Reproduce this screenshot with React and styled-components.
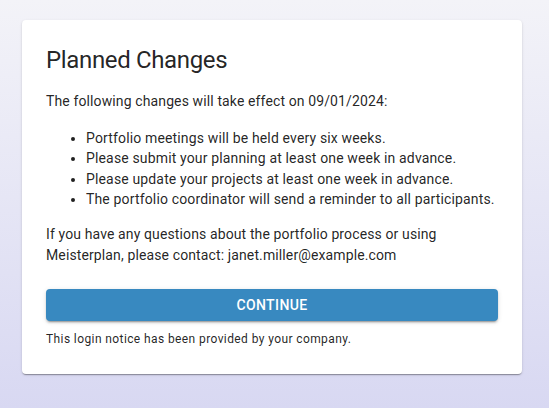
import React from "react";
import styled, { createGlobalStyle } from "styled-components";

const Global = createGlobalStyle`
  html, body { margin: 0; padding: 0; }
  body {
    font-family: Roboto, "Liberation Sans", Arial, sans-serif;
    -webkit-font-smoothing: antialiased;
  }
`;

const Page = styled.div`
  width: 549px;
  height: 408px;
  box-sizing: border-box;
  padding: 20px 0 0 22px;
  background: linear-gradient(180deg, #f3f3f8 0%, #d8d8f2 100%);
  overflow: hidden;
`;

const Card = styled.div`
  width: 500px;
  box-sizing: border-box;
  padding: 24px 24px 25px;
  background: #fff;
  border-radius: 4px;
  box-shadow: 0 2px 1px -1px rgba(0,0,0,0.2), 0 1px 1px 0 rgba(0,0,0,0.14), 0 1px 3px 0 rgba(0,0,0,0.12);
  color: rgba(0,0,0,0.87);
`;

const Title = styled.h2`
  margin: 0 0 15px;
  font-size: 24px;
  line-height: 32px;
  font-weight: 400;
  letter-spacing: -0.35px;
`;

const Text = styled.p`
  margin: 0;
  font-size: 14px;
  line-height: ${p => p.$lh || 20}px;
  letter-spacing: 0.12px;
`;

const List = styled.ul`
  margin: 17px 0 15px;
  padding-left: 40px;
  font-size: 14px;
  line-height: 20.3px;
  letter-spacing: 0.15px;
`;

const Button = styled.button`
  display: block;
  width: 100%;
  height: 32px;
  margin-top: 23px;
  border: 0;
  border-radius: 4px;
  background: #3889c0;
  color: #fff;
  font-family: inherit;
  font-size: 14px;
  font-weight: 500;
  letter-spacing: 0.4px;
  text-transform: uppercase;
  box-shadow: 0 3px 1px -2px rgba(0,0,0,0.2), 0 2px 2px 0 rgba(0,0,0,0.14), 0 1px 5px 0 rgba(0,0,0,0.12);
  cursor: pointer;
`;

const Note = styled.div`
  margin-top: 8px;
  font-size: 12px;
  line-height: 20px;
  letter-spacing: 0.4px;
`;

export default function App() {
  return (
    <>
      <Global />
      <Page>
        <Card>
          <Title>Planned Changes</Title>
          <Text>The following changes will take effect on 09/01/2024:</Text>
          <List>
            <li>Portfolio meetings will be held every six weeks.</li>
            <li>Please submit your planning at least one week in advance.</li>
            <li>Please update your projects at least one week in advance.</li>
            <li>The portfolio coordinator will send a reminder to all participants.</li>
          </List>
          <Text $lh={21}>
            If you have any questions about the portfolio process or using
            <br />
            Meisterplan, please contact: janet.miller@example.com
          </Text>
          <Button>Continue</Button>
          <Note>This login notice has been provided by your company.</Note>
        </Card>
      </Page>
    </>
  );
}
